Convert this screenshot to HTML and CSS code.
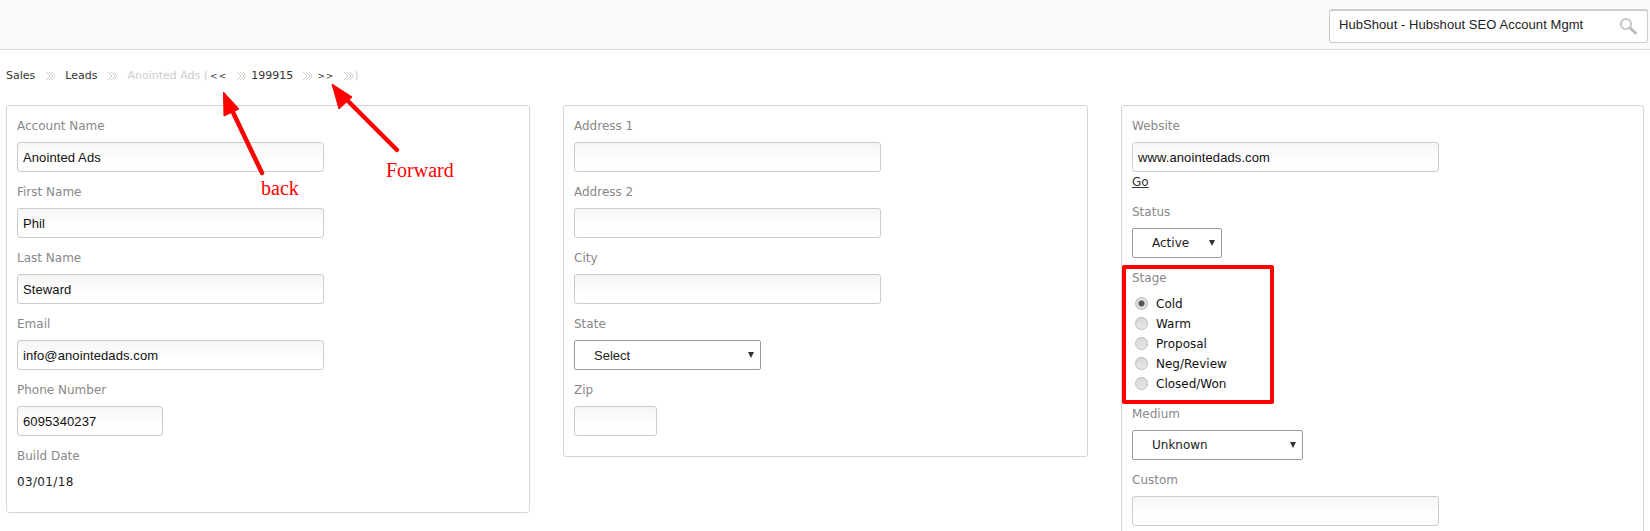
FILE: index.html
```html
<!DOCTYPE html>
<html lang="en">
<head>
<meta charset="utf-8">
<title>Anointed Ads</title>
<link rel="stylesheet" href="styles.css">
</head>
<body>
<svg class="defs" width="0" height="0" aria-hidden="true">
  <symbol id="sep" viewBox="0 0 11 10">
    <path d="M1 1l4 4-4 4M4 1l4 4-4 4M7 1l3 4-3 4" fill="none" stroke="#cfcfcf" stroke-width="1"/>
  </symbol>
</svg>
<header class="topbar">
  <div class="search">
    <span class="search-text">HubShout - Hubshout SEO Account Mgmt</span>
    <svg class="search-icon" viewBox="0 0 18 18" width="18" height="18">
      <circle cx="7" cy="7" r="5.2" fill="none" stroke="#c4c4c4" stroke-width="1.8"/>
      <path d="M11 11l5.5 5" stroke="#bbb" stroke-width="3" stroke-linecap="round"/>
    </svg>
  </div>
</header>
<nav class="crumbs">
  <span class="crumb">Sales</span><svg class="sep s1"><use href="#sep"/></svg>
  <span class="crumb">Leads</span><svg class="sep s1"><use href="#sep"/></svg>
  <span class="crumb muted">Anointed Ads (</span><span class="crumb arrows back">&lt;&lt;</span><svg class="sep s2"><use href="#sep"/></svg>
  <span class="crumb">199915</span><svg class="sep s2"><use href="#sep"/></svg>
  <span class="crumb arrows">&gt;&gt;</span><svg class="sep s3"><use href="#sep"/></svg><span class="crumb muted">)</span>
</nav>
<main class="panels">
  <section class="panel">
    <div class="field"><label>Account Name</label><input class="input" value="Anointed Ads"></div>
    <div class="field"><label>First Name</label><input class="input" value="Phil"></div>
    <div class="field"><label>Last Name</label><input class="input" value="Steward"></div>
    <div class="field"><label>Email</label><input class="input" value="info@anointedads.com"></div>
    <div class="field"><label>Phone Number</label><input class="input phone" value="6095340237"></div>
    <div class="field"><label>Build Date</label><div class="value">03/01/18</div></div>
  </section>
  <section class="panel">
    <div class="field"><label>Address 1</label><input class="input"></div>
    <div class="field"><label>Address 2</label><input class="input"></div>
    <div class="field"><label>City</label><input class="input"></div>
    <div class="field"><label>State</label><div class="select state"><select><option>Select</option></select></div></div>
    <div class="field"><label>Zip</label><input class="input zip"></div>
  </section>
  <section class="panel">
    <div class="field"><label>Website</label><input class="input" value="www.anointedads.com"><a class="go" href="#">Go</a></div>
    <div class="field"><label>Status</label><div class="select status"><select><option>Active</option></select></div></div>
    <div class="field stage"><label>Stage</label>
      <ul class="radios">
        <li><input type="radio" name="stage" checked><span>Cold</span></li>
        <li><input type="radio" name="stage"><span>Warm</span></li>
        <li><input type="radio" name="stage"><span>Proposal</span></li>
        <li><input type="radio" name="stage"><span>Neg/Review</span></li>
        <li><input type="radio" name="stage"><span>Closed/Won</span></li>
      </ul>
    </div>
    <div class="field"><label>Medium</label><div class="select medium"><select><option>Unknown</option></select></div></div>
    <div class="field"><label>Custom</label><input class="input"></div>
  </section>
</main>
<div class="redbox"></div>
<svg class="notes" width="1650" height="531" viewBox="0 0 1650 531">
  <path d="M262 173L229 104" stroke="#f00" stroke-width="4.5" stroke-linecap="round"/>
  <path d="M223.500 92L239 109L224 116Z" fill="#f00" stroke="#f00" stroke-linejoin="round"/>
  <path d="M397 150L342 95" stroke="#f00" stroke-width="4.5" stroke-linecap="round"/>
  <path d="M332 84L352 97L339 109Z" fill="#f00" stroke="#f00" stroke-linejoin="round"/>
  <text class="note" x="261" y="195">back</text>
  <text class="note" x="386" y="177">Forward</text>
</svg>
</body>
</html>
```
FILE: styles.css
```css
* { box-sizing: border-box; }
html, body { margin: 0; height: 531px; overflow: hidden; background: #fff; }
body { position: relative; font-family: "DejaVu Sans", sans-serif; font-size: 12px; color: #222; }
.defs { position: absolute; }

.topbar { height: 50px; background: #fafafa; border-bottom: 1px solid #ddd; display: flex; justify-content: flex-end; padding: 9px 2px 0 0; }
.search { width: 319px; height: 34px; background: #fff; border: 1px solid #ccc; border-top-width: 2px; border-radius: 3px; display: flex; align-items: center; justify-content: space-between; padding: 0 10px 0 9px; }
.search-text { font: 13px/20px "Liberation Sans", Arial, sans-serif; letter-spacing: .06px; color: #222; margin-top: -4px; }
.search-icon { margin-top: -2px; }

.crumbs { height: 20px; margin: 16px 0 19px 6px; display: flex; align-items: center; font-size: 11px; line-height: 20px; color: #333; }
.crumb { white-space: nowrap; }
.muted { color: #ccc; }
.arrows { font-size: 9px; letter-spacing: 1px; }
.back { margin-left: 2px; }
.sep { width: 11px; height: 10px; flex: none; }
.s1 { margin: 0 9px 0 10px; }
.s2 { margin: 0 4px 0 9px; }
.s3 { margin: 0 0 0 9px; }

.panels { display: grid; grid-template-columns: 524px 525px 523px; column-gap: 33px; padding-left: 6px; align-items: start; }
.panel { border: 1px solid #d4d4d4; border-radius: 3px; padding: 9px 10px 11px; }
.field { margin-bottom: 9px; }
.field label { display: block; height: 20px; margin-bottom: 7px; line-height: 22px; color: #888; font-size: 12px; }

.input { display: block; width: 307px; height: 30px; padding: 0 5px; border: 1px solid #ccc; border-radius: 3px; background: linear-gradient(#f6f6f6, #fff 70%); font: 13px "Liberation Sans", Arial, sans-serif; letter-spacing: .1px; color: #111; outline: 0; }
.phone { width: 146px; }
.zip { width: 83px; }
.value { height: 20px; line-height: 20px; color: #222; font-size: 12px; letter-spacing: .35px; }
.go { display: block; height: 20px; line-height: 20px; color: #333; font-size: 12px; }

.select { position: relative; height: 30px; }
.select select { appearance: none; -webkit-appearance: none; display: block; width: 100%; height: 30px; padding: 0 0 0 19px; border: 1px solid #999; border-radius: 2px; background: #fff; font: 13px "Liberation Sans", Arial, sans-serif; color: #222; outline: 0; }
.status select, .medium select { font-family: "DejaVu Sans", sans-serif; font-size: 12px; }
.select::after { content: ""; position: absolute; right: 7px; top: 12px; border: 3.500px solid transparent; border-top: 6px solid #333; border-bottom: 0; pointer-events: none; }
.state { width: 187px; }
.status { width: 90px; }
.medium { width: 171px; }

.stage { margin-bottom: 10px; }
.stage label { margin-bottom: 6px; }
.radios { list-style: none; margin: 0; padding: 0 0 0 1px; }
.radios li { display: flex; align-items: center; height: 20px; color: #111; }
.radios span { margin-top: 2px; }
.radios input { appearance: none; -webkit-appearance: none; width: 13px; height: 13px; margin: 0 8px 0 2px; border: 1px solid #bbb; border-radius: 50%; background: linear-gradient(#d8d8d8, #e8e8e8); }
.radios input:checked { background: radial-gradient(circle, #555 0, #555 2.500px, #ddd 3.500px); }

.redbox { position: absolute; left: 1122px; top: 265px; width: 152px; height: 139px; border: 4px solid #f00; border-radius: 2px; }
.notes { position: absolute; left: 0; top: 0; pointer-events: none; }
.note { font: 20px "Liberation Serif", "Times New Roman", serif; fill: #f00; }
```
